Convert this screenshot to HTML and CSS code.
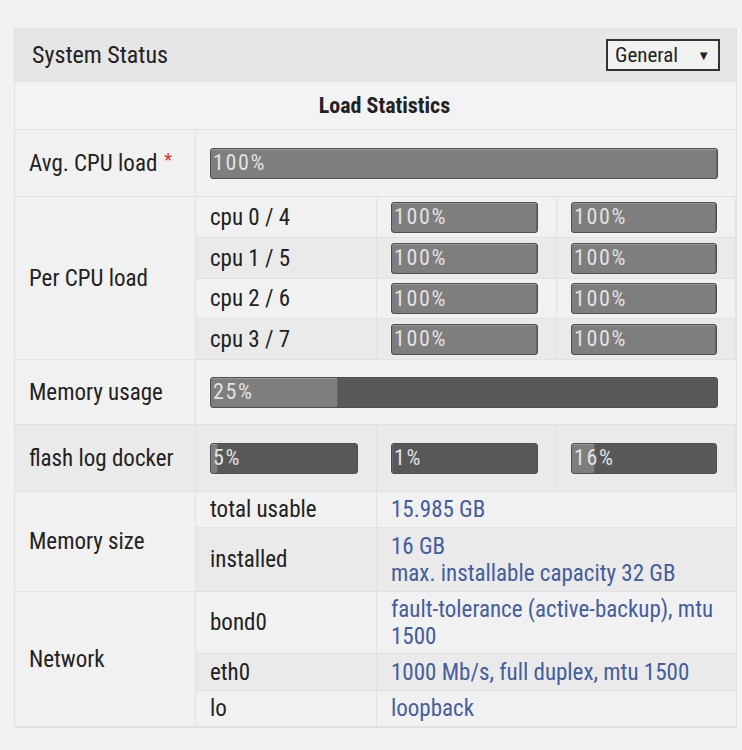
FILE: index.html
```html
<!DOCTYPE html>
<html lang="en">
<head>
<meta charset="utf-8">
<title>System Status</title>
<link rel="stylesheet" href="styles.css">
</head>
<body>
<div class="panel">
  <div class="panel-head">
    <span class="panel-title">System Status</span>
    <div class="select"><span>General</span><span class="caret">▼</span></div>
  </div>
  <div class="section-title">Load Statistics</div>
  <div class="stats">
    <div class="c lbl">Avg. CPU load <span class="req">*</span></div>
    <div class="c span3"><div class="bar"><div class="fill" style="width:100%"></div><span class="pct">100%</span></div></div>

    <div class="c lbl rs4">Per CPU load</div>
    <div class="c sub">cpu 0 / 4</div>
    <div class="c"><div class="bar"><div class="fill" style="width:100%"></div><span class="pct">100%</span></div></div>
    <div class="c"><div class="bar"><div class="fill" style="width:100%"></div><span class="pct">100%</span></div></div>
    <div class="c sub alt">cpu 1 / 5</div>
    <div class="c alt"><div class="bar"><div class="fill" style="width:100%"></div><span class="pct">100%</span></div></div>
    <div class="c alt"><div class="bar"><div class="fill" style="width:100%"></div><span class="pct">100%</span></div></div>
    <div class="c sub">cpu 2 / 6</div>
    <div class="c"><div class="bar"><div class="fill" style="width:100%"></div><span class="pct">100%</span></div></div>
    <div class="c"><div class="bar"><div class="fill" style="width:100%"></div><span class="pct">100%</span></div></div>
    <div class="c sub alt">cpu 3 / 7</div>
    <div class="c alt"><div class="bar"><div class="fill" style="width:100%"></div><span class="pct">100%</span></div></div>
    <div class="c alt"><div class="bar"><div class="fill" style="width:100%"></div><span class="pct">100%</span></div></div>

    <div class="c lbl">Memory usage</div>
    <div class="c span3"><div class="bar"><div class="fill" style="width:25%"></div><span class="pct">25%</span></div></div>

    <div class="c lbl alt">flash log docker</div>
    <div class="c alt"><div class="bar"><div class="fill" style="width:5%"></div><span class="pct">5%</span></div></div>
    <div class="c alt"><div class="bar"><div class="fill" style="width:1%"></div><span class="pct">1%</span></div></div>
    <div class="c alt"><div class="bar"><div class="fill" style="width:16%"></div><span class="pct">16%</span></div></div>

    <div class="c lbl rs2">Memory size</div>
    <div class="c sub">total usable</div>
    <div class="c val span2">15.985 GB</div>
    <div class="c sub alt">installed</div>
    <div class="c val span2 alt">16 GB<br>max. installable capacity 32 GB</div>

    <div class="c lbl rs3">Network</div>
    <div class="c sub">bond0</div>
    <div class="c val span2">fault-tolerance (active-backup), mtu 1500</div>
    <div class="c sub alt">eth0</div>
    <div class="c val span2 alt">1000 Mb/s, full duplex, mtu 1500</div>
    <div class="c sub">lo</div>
    <div class="c val span2">loopback</div>
  </div>
</div>
</body>
</html>
```
FILE: styles.css
```css
* { box-sizing: border-box; }
html, body { background: #f2f2f2; }
body {
  margin: 0;
  padding: 28px 5px 0 14px;
  font-family: "Roboto Condensed", Roboto, "Liberation Sans", sans-serif;
  font-size: 23px;
  color: #222;
}
.panel {
  width: 723px;
  border-left: 1px solid #e0e0e0;
  border-right: 1px solid #e0e0e0;
  border-bottom: 1px solid #e0e0e0;
}
.panel-head {
  height: 54px;
  background: #e6e6e6;
  display: flex;
  align-items: center;
  justify-content: space-between;
  padding: 0 16px 0 17px;
}
.panel-title { font-size: 24px; color: #222; }
.select {
  width: 114px;
  height: 32px;
  border: 2px solid #333;
  background: #f1f1f1;
  display: flex;
  align-items: center;
  justify-content: space-between;
  padding: 0 8px 0 7px;
  font-size: 21px;
  color: #222;
}
.caret { font-size: 13px; }
.section-title {
  height: 48px;
  display: flex;
  align-items: center;
  justify-content: center;
  padding-left: 18px;
  font-weight: bold;
  font-size: 22px;
  background: #f3f3f3;
  border-bottom: 1px solid #e0e0e0;
}
.stats {
  display: grid;
  grid-template-columns: 181px 181px 180px 179px;
  grid-template-rows: 67px 41px 41px 40px 41px 65px 67px 36px 64px 62px 37px 36px;
  background: #f1f1f1;
}
.c {
  display: flex;
  align-items: center;
  padding: 0 18px 0 14px;
  border-bottom: 1px solid #e2e2e2;
  border-right: 1px solid #e2e2e2;
  background: #f1f1f1;
}
.lbl, .sub { color: #222; }
.alt { background: #eaeaea; }
.span3 { grid-column: span 3; border-right: none; }
.span2 { grid-column: span 2; border-right: none; }
.rs4 { grid-row: span 4; }
.rs3 { grid-row: span 3; }
.rs2 { grid-row: span 2; }
.val { color: #445d9d; line-height: 27px; }
.req { color: #e0302a; font-size: 18px; margin-left: 7px; align-self: flex-start; margin-top: 19px; }
.bar {
  width: 100%;
  height: 31px;
  border: 1px solid #4f4f4f;
  border-radius: 3px;
  background: #585858;
  display: grid;
  overflow: hidden;
}
.fill, .pct { grid-area: 1 / 1; }
.fill {
  height: 100%;
  background: #7e7e7e;
  border-top: 1px solid #9a9a9a;
  border-right: 1px solid #666;
  border-radius: 2px;
}
.pct {
  align-self: center;
  padding-left: 2px;
  color: #e2e2e2;
  font-size: 22px;
  letter-spacing: 1.6px;
  line-height: 1;
}
```
